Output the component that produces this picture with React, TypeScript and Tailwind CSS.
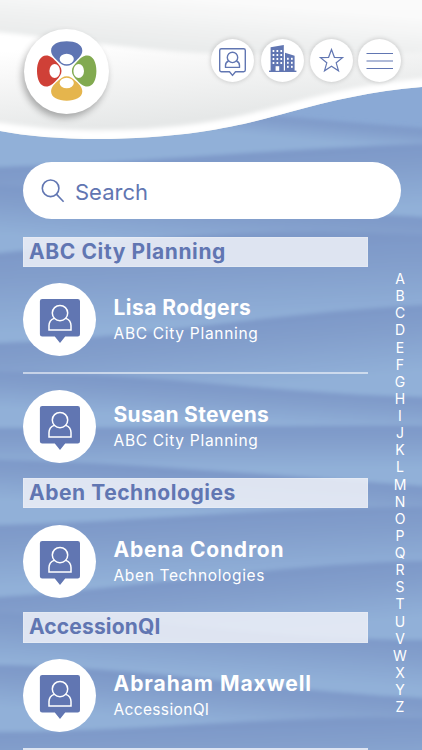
import { clsx } from 'clsx';

type Wave = { left: number; midLeft: number; midRight: number; right: number; depth: number };

const waves: Wave[] = [
  { left: 90, midLeft: 102, midRight: 118, right: 128, depth: 22 },
  { left: 167, midLeft: 163, midRight: 148, right: 144, depth: 62 },
  { left: 186, midLeft: 190, midRight: 210, right: 217, depth: 48 },
  { left: 253, midLeft: 238, midRight: 226, right: 235, depth: 80 },
  { left: 343, midLeft: 338, midRight: 312, right: 305, depth: 66 },
  { left: 372, midLeft: 372, midRight: 394, right: 397, depth: 36 },
  { left: 428, midLeft: 428, midRight: 425, right: 426, depth: 42 },
  { left: 460, midLeft: 463, midRight: 476, right: 486, depth: 40 },
  { left: 525, midLeft: 522, midRight: 506, right: 507, depth: 62 },
  { left: 597, midLeft: 588, midRight: 563, right: 561, depth: 56 },
  { left: 613, midLeft: 617, midRight: 640, right: 640, depth: 48 },
  { left: 665, midLeft: 666, midRight: 692, right: 698, depth: 42 },
  { left: 732, midLeft: 732, midRight: 714, right: 718, depth: 60 },
];

const groups = [
  {
    company: 'ABC City Planning',
    tracking: 'tracking-[0.6px]',
    subTracking: 'tracking-[0.7px]',
    row: 'h-[105.3px] pt-4',
    contacts: [
      { name: 'Lisa Rodgers', tracking: 'tracking-[0.45px]' },
      { name: 'Susan Stevens', tracking: 'tracking-[0.3px]' },
    ],
  },
  {
    company: 'Aben Technologies',
    tracking: 'tracking-[0.55px]',
    subTracking: 'tracking-[0.65px]',
    row: 'h-[104.4px] pt-[17px]',
    contacts: [{ name: 'Abena Condron', tracking: 'tracking-[0.8px]' }],
  },
  {
    company: 'AccessionQI',
    tracking: 'tracking-[0.15px]',
    subTracking: 'tracking-[0.35px]',
    row: 'h-[105.5px] pt-4',
    contacts: [{ name: 'Abraham Maxwell', tracking: 'tracking-[0.95px]' }],
  },
];

const letters = 'ABCDEFGHIJKLMNOPQRSTUVWXYZ'.split('');

function Background() {
  return (
    <svg className="absolute inset-0" width="422" height="750" viewBox="0 0 422 750" fill="none">
      <defs>
        {waves.map((w, i) => {
          const mid = (w.left + w.right) / 2;
          const slope = (w.right - w.left) / 422;
          return (
            <linearGradient
              key={i}
              id={`wave${i}`}
              gradientUnits="userSpaceOnUse"
              x1="211"
              y1={mid}
              x2={211 - slope * w.depth}
              y2={mid + w.depth}
            >
              <stop offset="0" stopColor="#7d98c8" />
              <stop offset="0.35" stopColor="#839fcc" />
              <stop offset="1" stopColor="#91b0d8" />
            </linearGradient>
          );
        })}
        <linearGradient id="fold" gradientUnits="userSpaceOnUse" x1="211" y1="0" x2="207" y2="50">
          <stop offset="0" stopColor="#fafafa" />
          <stop offset="1" stopColor="#e9ebeb" />
        </linearGradient>
        <linearGradient id="sheet" gradientUnits="userSpaceOnUse" x1="100" y1="42" x2="108" y2="126">
          <stop offset="0" stopColor="#ffffff" />
          <stop offset="0.3" stopColor="#f8f8f8" />
          <stop offset="1" stopColor="#e6e8e8" />
        </linearGradient>
        <clipPath id="headerClip">
          <path d="M0 0H422V87C372 91 330 101 290 112C268 118 240 126 200 132C130 142 50 141 0 131Z" />
        </clipPath>
        <filter id="soft" x="-10%" y="-10%" width="120%" height="120%">
          <feGaussianBlur stdDeviation="2" />
        </filter>
      </defs>
      <rect width="422" height="750" fill="#8aa9d5" />
      <g filter="url(#soft)">
        {waves.map((w, i) => (
          <path
            key={i}
            d={`M-20 ${w.left}H0C140 ${w.midLeft} 280 ${w.midRight} 422 ${w.right}H442V780H-20Z`}
            fill={`url(#wave${i})`}
          />
        ))}
      </g>
      <g clipPath="url(#headerClip)">
        <rect width="422" height="145" fill="url(#sheet)" />
        <g filter="url(#soft)">
          <path d="M-20 -20H442V52C360 56 250 55 200 53C140 50 60 38 -20 30Z" fill="url(#fold)" />
          <path
            d="M442 82C372 88 330 98 290 109C268 115 240 123 200 129C130 139 50 138 -20 125"
            stroke="#fff"
            strokeWidth="11"
          />
        </g>
      </g>
    </svg>
  );
}

function Logo() {
  const petals = [
    { color: '#5f75b3', angle: 0 },
    { color: '#82aa50', angle: 90 },
    { color: '#e5b54d', angle: 180 },
    { color: '#cf4037', angle: 270 },
  ];
  return (
    <div className="h-[85px] w-[85px] rounded-full bg-white shadow-[-2px_4px_7px_rgba(0,0,0,0.3)]">
      <svg width="85" height="85" viewBox="0 0 85 85">
        <g transform="translate(42.7 42)">
          {petals.map((p) => (
            <g key={p.color} transform={`rotate(${p.angle})`}>
              <path
                d="M0-29.7C8.5-29.7 15.6-26.5 15.6-20.5C15.6-16.5 13-13.8 9.8-10.8C6-7.2 3.5-5.2 0-5.2C-3.5-5.2-6-7.2-9.8-10.8C-13-13.8-15.6-16.5-15.6-20.5C-15.6-26.5-8.5-29.7 0-29.7Z"
                fill={p.color}
              />
              <ellipse cy="-12" rx="7.1" ry="5.3" fill="#fff" />
            </g>
          ))}
        </g>
      </svg>
    </div>
  );
}

function BubbleIcon() {
  return (
    <svg width="43" height="43" viewBox="0 0 43 43" fill="none" stroke="#6176b2" strokeWidth="1.4" strokeLinejoin="round">
      <path d="M10.4 9.8H32.6a1.7 1.7 0 0 1 1.7 1.7V31a1.7 1.7 0 0 1-1.7 1.7H24.5L21.5 36.4L18.5 32.7H10.4a1.7 1.7 0 0 1-1.7-1.7V11.5a1.7 1.7 0 0 1 1.7-1.7Z" />
      <circle cx="21.5" cy="18.4" r="5.2" />
      <path d="M17.6 22C15.5 22.8 14.5 24.4 14.5 26.4V28.4H28.5V26.4C28.5 24.4 27.5 22.8 25.4 22" />
    </svg>
  );
}

function BuildingsIcon() {
  return (
    <svg width="43" height="43" viewBox="0 0 43 43" fill="#6176b2">
      <path d="M9.6 8.2L22.8 6V32.2H9.6Z" />
      <path d="M24 13.8L33.6 16.8V32.2H24Z" />
      <path d="M8 31.6H35.4V33H8Z" />
      <g fill="#fff">
        {[11.6, 15.5, 19.4].map((x) =>
          [11, 15, 19, 23].map((y) => <rect key={`${x}-${y}`} x={x} y={y} width="1.7" height="2" />)
        )}
        {[26, 30].map((x) =>
          [18.8, 22.8, 26.8].map((y) => <rect key={`${x}-${y}`} x={x} y={y} width="1.7" height="2" />)
        )}
        <rect x="14.6" y="27.2" width="3.6" height="4.6" />
      </g>
    </svg>
  );
}

function StarIcon() {
  return (
    <svg width="43" height="43" viewBox="0 0 43 43" fill="none" stroke="#6176b2" strokeWidth="1.2">
      <path d="M21.5 10.5L24.4 18.3L32.6 18.6L26.2 23.8L28.5 31.8L21.5 27.2L14.5 31.8L16.8 23.8L10.4 18.6L18.6 18.3Z" />
    </svg>
  );
}

function MenuIcon() {
  return (
    <svg width="43" height="43" viewBox="0 0 43 43" stroke="#6176b2" strokeWidth="1.1">
      <path d="M8.5 14.5H35M8.5 22H35M8.5 29.5H35" />
    </svg>
  );
}

const navItems = [
  { Icon: BubbleIcon, margin: 'ml-0' },
  { Icon: BuildingsIcon, margin: 'ml-[7.5px]' },
  { Icon: StarIcon, margin: 'ml-[5.5px]' },
  { Icon: MenuIcon, margin: 'ml-[5px]' },
];

function Avatar() {
  return (
    <div className="h-[73px] w-[73px] shrink-0 rounded-full bg-white">
      <svg width="73" height="73" viewBox="0 0 73 73" fill="none">
        <path
          d="M19.2 15.9H54.7a2.3 2.3 0 0 1 2.3 2.3V51.2a2.3 2.3 0 0 1-2.3 2.3H42.2L37 60L31.8 53.5H19.2a2.3 2.3 0 0 1-2.3-2.3V18.2a2.3 2.3 0 0 1 2.3-2.3Z"
          fill="#6176b2"
        />
        <g stroke="#fff" strokeWidth="1.5">
          <circle cx="37" cy="30.1" r="7.7" />
          <path d="M31.1 35.4C27.7 36.8 26 39.4 26 42.6V47H48V42.6C48 39.4 46.3 36.8 42.9 35.4" />
        </g>
      </svg>
    </div>
  );
}

export default function App() {
  return (
    <div className="relative h-[750px] w-[422px] overflow-hidden font-['Inter',sans-serif]">
      <Background />
      <div className="relative">
        <header className="flex h-[161.5px] items-start justify-between pl-6 pr-[21.5px] pt-[29px]">
          <Logo />
          <nav className="flex pt-[10px]">
            {navItems.map(({ Icon, margin }, index) => (
              <button
                key={index}
                className={clsx('h-[43px] w-[43px] rounded-full bg-white shadow-[0_0_5px_rgba(0,0,0,0.2)]', margin)}
              >
                <Icon />
              </button>
            ))}
          </nav>
        </header>

        <div className="ml-[23px] flex h-[57.5px] w-[377.5px] items-center rounded-full bg-white pl-[18px] text-[#6176b2]">
          <svg width="25" height="25" viewBox="0 0 25 25" fill="none" stroke="currentColor" strokeWidth="1.6">
            <circle cx="9.6" cy="10.3" r="8.3" />
            <path d="M15.6 16.4L22.6 23.8" />
          </svg>
          <span className="pl-[9px] pt-1 text-[22px] leading-none">Search</span>
        </div>

        <main className="flex items-start pl-[23px] pt-[18px]">
          <div className="w-[344.5px]">
            {groups.map((group) => (
              <section key={group.company}>
                <h2
                  className={clsx(
                    'h-[30.2px] border border-white/20 bg-[#eef1f8]/85 pl-[5px] text-[21px] font-bold leading-[28px] text-[#6176b2]',
                    group.tracking
                  )}
                >
                  {group.company}
                </h2>
                {group.contacts.map((contact, index) => (
                  <div
                    key={contact.name}
                    className={clsx('flex', group.row, index > 0 && 'border-t-2 border-white/55')}
                  >
                    <Avatar />
                    <div className="pl-[17.5px] pt-[13px] text-white">
                      <div className={clsx('whitespace-nowrap text-[21px] font-bold leading-6', contact.tracking)}>
                        {contact.name}
                      </div>
                      <div className={clsx('whitespace-nowrap pt-1 text-[15.5px] leading-5', group.subTracking)}>
                        {group.company}
                      </div>
                    </div>
                  </div>
                ))}
              </section>
            ))}
            <div className="h-[30px] bg-[#eef1f8]/85" />
          </div>
          <ul className="ml-[17.5px] w-[30px] pt-[33px] text-center text-[14px] leading-[17.13px] text-white">
            {letters.map((letter) => (
              <li key={letter}>{letter}</li>
            ))}
          </ul>
        </main>
      </div>
    </div>
  );
}
